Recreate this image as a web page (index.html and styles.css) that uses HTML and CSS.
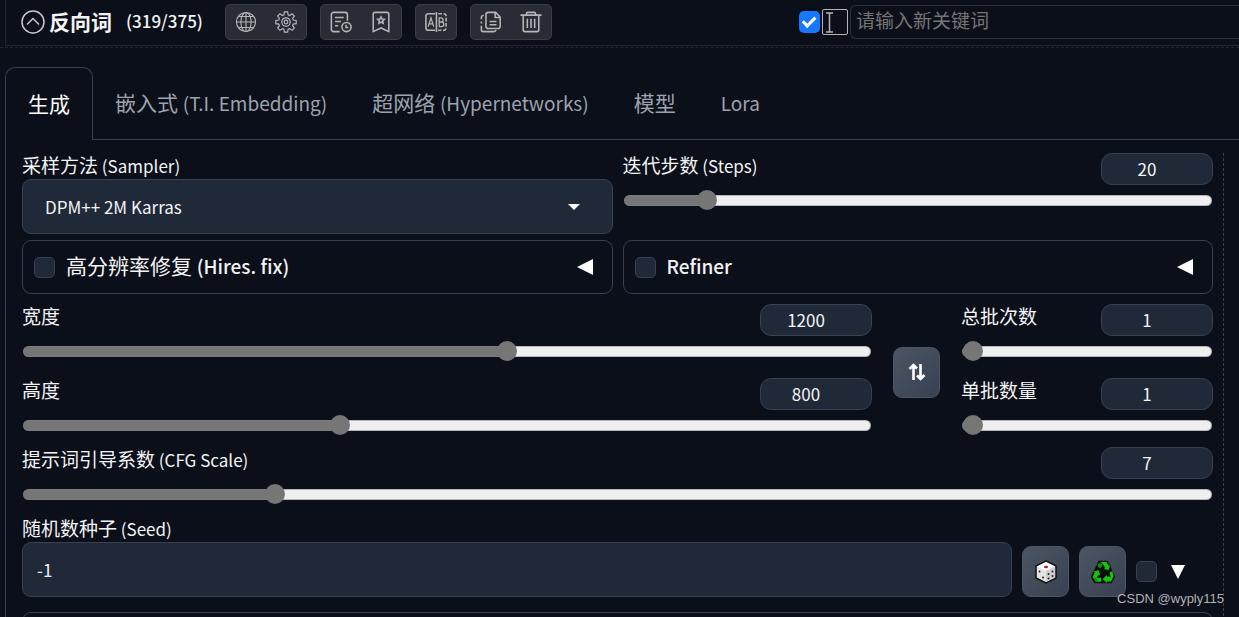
FILE: index.html
```html
<!DOCTYPE html>
<html lang="zh-CN">
<head>
<meta charset="utf-8">
<meta name="viewport" content="width=device-width, initial-scale=1">
<title>Stable Diffusion</title>
<link rel="stylesheet" href="styles.css">
</head>
<body>
<header class="prompt-bar">
  <button class="fold" type="button" aria-label="折叠">
    <svg width="24" height="24" viewBox="0 0 24 24"><circle cx="12" cy="12" r="11"/><path d="M6 14.5l6-6 6 6"/></svg>
  </button>
  <h1 class="prompt-title">反向词</h1>
  <span class="counter">(319/375)</span>
  <div class="tools">
    <div class="tool-group">
      <button type="button" aria-label="语言"><svg viewBox="0 0 24 24"><g stroke-width="1.2"><circle cx="12" cy="12" r="10.4"/><ellipse cx="12" cy="12" rx="5.6" ry="10.4"/><path d="M12 1.6v20.8M1.6 12h20.8M3.6 6h16.8M3.6 18h16.8"/></g></svg></button>
      <button type="button" aria-label="设置"><svg viewBox="0 0 24 24"><g stroke-width="1.3"><path d="M10.200 1h3.600l.5 3.200 1.700.7 2.600-1.900 2.500 2.500-1.900 2.600.7 1.700 3.200.5v3.500l-3.200.5-.7 1.700 1.900 2.600-2.500 2.500-2.600-1.900-1.700.7-.5 3.200h-3.600l-.5-3.200-1.700-.7-2.600 1.900-2.500-2.500 1.900-2.600-.7-1.700-3.200-.5v-3.500l3.200-.5.7-1.700-1.900-2.600 2.500-2.500 2.600 1.900 1.700-.7z"/><circle cx="12" cy="12" r="4.600"/><circle cx="12" cy="12" r="2"/></g></svg></button>
    </div>
    <div class="tool-group">
      <button type="button" aria-label="历史"><svg viewBox="0 0 24 24"><path d="M10.500 22.500H4a2.500 2.500 0 0 1-2.500-2.500V4A2.500 2.500 0 0 1 4 1.500h12.500A2.500 2.500 0 0 1 19 4v6.500M5.500 7H15M5.500 11.500h6.500M5.500 16h3.500"/><circle cx="18" cy="17.500" r="5"/><path d="M17.500 15v3h2.500"/></svg></button>
      <button type="button" aria-label="收藏"><svg viewBox="0 0 24 24"><path d="M3.500 22.500V3.500a2 2 0 0 1 2-2h13a2 2 0 0 1 2 2v19L12 18.500z"/><path d="M12 6.500l1.100 2.300 2.500.3-1.800 1.700.5 2.500-2.300-1.200-2.300 1.200.5-2.500-1.800-1.700 2.500-.3z"/></svg></button>
    </div>
    <div class="tool-group">
      <button type="button" aria-label="翻译"><svg viewBox="0 0 24 24"><path d="M11 3H3.500A2.500 2.500 0 0 0 1 5.500v13A2.500 2.500 0 0 0 3.500 21H11M12.500 1v22"/><path d="M14.500 3h5A2.800 2.800 0 0 1 23 6v12a2.800 2.800 0 0 1-3.500 3h-5" stroke-dasharray="4 1.800"/><path d="M3.500 17L6.500 7.500 9.500 17M4.500 14h4M15.500 7.500V17h2.500a2.500 2.500 0 0 0 0-5h-2.500 2a2.200 2.200 0 0 0 0-4.500z" stroke-width="1.400"/></svg></button>
    </div>
    <div class="tool-group">
      <button type="button" aria-label="复制"><svg viewBox="0 0 24 24"><path d="M17 1.500H9A2.500 2.500 0 0 0 6.500 4v12.500A2.500 2.500 0 0 0 9 19h10.500a2.500 2.500 0 0 0 2.500-2.500V6.500zM16.500 1.500V7H22M10.500 11.500H18M10.500 15H18"/><path d="M4 5H3.500A2 2 0 0 0 1.500 7v2M1.500 11.500v2M1.500 16v4.500a2 2 0 0 0 2 2h11.500a2.500 2.500 0 0 0 2.500-2"/></svg></button>
      <button type="button" aria-label="删除"><svg viewBox="0 0 24 24"><path d="M.5 4.500h23M7 4V3a1.500 1.500 0 0 1 1.500-1.500h7A1.500 1.500 0 0 1 17 3v1M3.500 5v15.500a2 2 0 0 0 2 2h13a2 2 0 0 0 2-2V5M8 8.500v10M12 8.500v10M16 8.500v10"/></svg></button>
    </div>
  </div>
  <div class="keyword">
    <input class="keyword-check" type="checkbox" checked aria-label="启用">
    <button class="cursor-button" type="button" aria-label="光标"><svg width="24" height="24" viewBox="0 0 24 24"><path d="M3 3h7M6.500 3v19M3 22h7"/></svg></button>
    <input class="keyword-input" type="text" placeholder="请输入新关键词" aria-label="新关键词">
  </div>
</header>

<main class="workspace">
  <nav class="tabs" role="tablist">
    <button class="tab tab-active" type="button" role="tab" aria-selected="true">生成</button>
    <button class="tab" type="button" role="tab">嵌入式 <span class="latin">(T.I. Embedding)</span></button>
    <button class="tab" type="button" role="tab">超网络 <span class="latin">(Hypernetworks)</span></button>
    <button class="tab" type="button" role="tab">模型</button>
    <button class="tab" type="button" role="tab"><span class="latin">Lora</span></button>
    <span class="tab-rest"></span>
  </nav>

  <div class="panel">
    <form class="settings">
      <div class="halves">
        <div class="field">
          <label class="label" for="sampler">采样方法<span class="latin"> (Sampler)</span></label>
          <div class="select-wrap">
            <select class="box" id="sampler"><option>DPM++ 2M Karras</option></select>
            <svg class="caret" width="12" height="6" viewBox="0 0 12 6"><path d="M0 0h12L6 6z"/></svg>
          </div>
        </div>
        <div class="slider">
          <label class="label" for="steps">迭代步数<span class="latin"> (Steps)</span></label>
          <input class="number" type="number" value="20" aria-label="迭代步数">
          <input class="range" id="steps" type="range" min="1" max="150" value="20" style="--fill:0.128">
        </div>
      </div>

      <div class="halves">
        <div class="accordion">
          <input class="check" id="hires" type="checkbox">
          <label for="hires">高分辨率修复 <span class="latin">(Hires. fix)</span></label>
          <svg width="16" height="16" viewBox="0 0 16 16"><path d="M0 8L16 0v16z"/></svg>
        </div>
        <div class="accordion">
          <input class="check" id="refiner" type="checkbox">
          <label for="refiner"><span class="latin">Refiner</span></label>
          <svg width="16" height="16" viewBox="0 0 16 16"><path d="M0 8L16 0v16z"/></svg>
        </div>
      </div>

      <div class="dimensions">
        <div class="stack">
          <div class="slider">
            <label class="label" for="width">宽度</label>
            <input class="number" type="number" value="1200" aria-label="宽度">
            <input class="range" id="width" type="range" min="64" max="2048" value="1200" style="--fill:0.573">
          </div>
          <div class="slider">
            <label class="label" for="height">高度</label>
            <input class="number" type="number" value="800" aria-label="高度">
            <input class="range" id="height" type="range" min="64" max="2048" value="800" style="--fill:0.371">
          </div>
        </div>
        <button class="square" type="button" aria-label="交换宽高"><svg width="18" height="18" viewBox="0 0 18 18"><path d="M5.500 17V3M1.500 6L5.500 2 9 5.500M12.500 1v14M9 12.500l3.500 3.500 4-4" fill="none" stroke="#fff" stroke-width="2.600"/></svg></button>
        <div class="stack">
          <div class="slider">
            <label class="label" for="count">总批次数</label>
            <input class="number" type="number" value="1" aria-label="总批次数">
            <input class="range" id="count" type="range" min="1" max="100" value="1" style="--fill:0">
          </div>
          <div class="slider">
            <label class="label" for="size">单批数量</label>
            <input class="number" type="number" value="1" aria-label="单批数量">
            <input class="range" id="size" type="range" min="1" max="8" value="1" style="--fill:0">
          </div>
        </div>
      </div>

      <div class="slider cfg">
        <label class="label" for="cfg">提示词引导系数<span class="latin"> (CFG Scale)</span></label>
        <input class="number" type="number" value="7" aria-label="提示词引导系数">
        <input class="range" id="cfg" type="range" min="1" max="30" value="7" style="--fill:0.207">
      </div>

      <div class="seed">
        <div class="field seed-field">
          <label class="label" for="seed">随机数种子<span class="latin"> (Seed)</span></label>
          <input class="box seed-input" id="seed" type="text" value="-1">
        </div>
        <button class="square" type="button" aria-label="随机种子">
          <svg width="22" height="24" viewBox="0 0 22 24"><path d="M11 1l10 5v12l-10 5L1 18V6z" fill="#e4e4e4" stroke="#111" stroke-width="1.500"/><path d="M11 2l9 4.500-9 4.500-9-4.500z" fill="#fff"/><path d="M11 11l9-4.500v11L11 22z" fill="#cfcfcf"/><ellipse cx="11" cy="7" rx="2" ry="1.200" fill="#c4122d"/><g fill="#222"><circle cx="4.500" cy="11.500" r="1"/><circle cx="8" cy="17.500" r="1"/><circle cx="13.500" cy="14" r="1"/><circle cx="17.500" cy="11.500" r="1"/><circle cx="13.500" cy="18.500" r="1"/><circle cx="17.500" cy="16" r="1"/></g></svg>
        </button>
        <button class="square" type="button" aria-label="重用种子">
          <svg width="24" height="24" viewBox="0 0 24 24"><path d="M8 1.500h8l3 5 1.500 5 3 5-3.500 6H4L.5 17l4-8z" fill="#071007" stroke="#071007" stroke-width="1.500" stroke-linejoin="round"/><g fill="#16c60c"><path d="M9.500 2h6l2.200 3.800 1.500-.7-1.600 5-4.800-1.200 1.500-1-2.500-4z"/><path d="M18.500 12.500l2.700-1.200 1.500 4.700-2.700 5.500H16v1.500l-4.500-4 4.500-4v1.800h3.800z"/><path d="M2.500 11.500l5-1.300 1.800 5.300-1.700-.8-1.900 3H10v4H4.500L1.500 17l2.300-4.500z"/></g><path d="M8.500 2.500l3 2.200-1.800 3.800-3.500-2zM2 17.200l3.500.8L7 21.500H4.700z" fill="#0b8f08"/></svg>
        </button>
        <div class="extra">
          <input class="check" type="checkbox" aria-label="更多">
          <svg width="14" height="14" viewBox="0 0 14 14"><path d="M0 0h14L7 14z"/></svg>
        </div>
      </div>

      <section class="next-group"></section>
    </form>
  </div>
</main>
<div class="watermark">CSDN @wyply115</div>
</body>
</html>
```
FILE: styles.css
```css
* { box-sizing: border-box; }

body {
  margin: 0;
  height: 100vh;
  overflow: hidden;
  background: #0b0f19;
  color: #f3f4f6;
  font-family: "Noto Sans CJK SC", sans-serif;
  font-size: 19px;
  line-height: 24px;
}

button, input, select { font: inherit; color: inherit; margin: 0; }
button { padding: 0; border: 0; background: none; }
svg { display: block; fill: #fff; flex: none; }
.latin { line-height: 16px; }

/* Prompt toolbar */
.prompt-bar {
  display: flex;
  align-items: center;
  height: 46px;
  margin-left: 5px;
  padding: 0 0 2px 15px;
  border-left: 1px solid #1f2430;
  border-bottom: 1px solid #1f2430;
}
.fold svg { fill: none; stroke: #c9c9c9; stroke-width: 1.5; }
.prompt-title { margin: 0 0 0 4px; padding-bottom: 2px; font-size: 21px; font-weight: 700; }
.counter { margin-left: 14px; padding-bottom: 2px; font-size: 17px; font-weight: 500; }
.tools { display: flex; gap: 13px; margin-left: 22px; }
.tool-group {
  display: flex;
  gap: 18px;
  height: 36px;
  padding: 0 9px;
  align-items: center;
  border: 1px solid #3b3d47;
  border-radius: 5px;
  background: #292b35;
}
.tool-group svg { width: 22px; height: 22px; fill: none; stroke: #b5b5b8; stroke-width: 1.7; }
.keyword { display: flex; align-items: center; flex: 1; margin-left: 247px; }
.keyword-check {
  appearance: none;
  width: 21px;
  height: 22px;
  border-radius: 5px;
  background: #1677ff;
  display: grid;
  place-items: center;
}
.keyword-check::after {
  content: "";
  width: 5px;
  height: 10px;
  margin-bottom: 2px;
  border: solid #fff;
  border-width: 0 3px 3px 0;
  transform: rotate(45deg);
}
.cursor-button { margin: 0 2px; border: 1px solid #b5b5b5; border-radius: 2px; }
.cursor-button svg { fill: none; stroke: #b5b5b5; stroke-width: 1.5; }
.keyword-input {
  flex: 1;
  min-width: 0;
  height: 34px;
  padding: 0 5px 4px;
  border: 1px solid #2b2f38;
  border-right: 0;
  border-radius: 6px 0 0 6px;
  background: transparent;
}
.keyword-input::placeholder { color: #757575; opacity: 1; }

/* Tabs */
.workspace { margin-top: 1px; border-top: 1px dashed #1f2430; padding: 19px 0 0 5px; }
.tabs { display: flex; height: 73px; font-size: 21px; }
.tab {
  padding: 0 23px 2px 22px;
  color: #9ca3af;
  border-bottom: 1px solid #374151;
  white-space: nowrap;
}
.tab-active {
  padding: 0 22px 2px;
  color: #fff;
  border: 1px solid #374151;
  border-bottom: 0;
  border-radius: 10px 10px 0 0;
}
.tab-rest { flex: 1; border-bottom: 1px solid #374151; }
.tabs .latin, .accordion .latin { font-size: 19px; }

/* Settings */
.panel { border-left: 1px solid #374151; padding: 13px 15px 0 0; }
.settings {
  display: flex;
  flex-direction: column;
  gap: 6px;
  padding: 0 10px 0 16px;
  border-right: 1px dashed #374151;
}
.halves { display: grid; grid-template-columns: 1fr 1fr; gap: 10px; }
.label { display: block; height: 26px; white-space: nowrap; }
.label .latin { font-size: 17px; }
.box {
  display: block;
  width: 100%;
  height: 55px;
  border: 1px solid #374151;
  border-radius: 9px;
  background: #1f2937;
  font-size: 17px;
}
.select-wrap { display: grid; align-items: center; }
.select-wrap > * { grid-area: 1 / 1; }
select.box { appearance: none; padding: 0 22px; }
.caret { justify-self: end; margin-right: 33px; pointer-events: none; }

.slider {
  display: grid;
  grid-template-columns: 1fr 112px;
  grid-template-rows: 32px 30px;
}
.number {
  appearance: textfield;
  width: 100%;
  height: 32px;
  padding: 0 20px 1px 0;
  border: 1px solid #374151;
  border-radius: 11px;
  background: #1f2937;
  font-size: 17px;
  text-align: center;
}
.number::-webkit-inner-spin-button { appearance: none; margin: 0; }
.range {
  appearance: none;
  grid-column: 1 / -1;
  width: 100%;
  height: 30px;
  margin: 0;
  background: transparent;
}
.range::-webkit-slider-runnable-track {
  height: 11px;
  margin: 0 1px;
  border: 1px solid rgba(128, 128, 128, 0.5);
  border-radius: 6px;
  background: linear-gradient(#767676, #767676) 0 0 / calc(10px + (100% - 20px) * var(--fill)) 100% no-repeat border-box, #efefef;
}
.range::-webkit-slider-thumb {
  appearance: none;
  width: 20px;
  height: 20px;
  margin-top: -6px;
  border-radius: 50%;
  background: #767676;
}

.accordion {
  display: flex;
  align-items: center;
  height: 54px;
  padding: 0 19px 0 11px;
  border: 1px solid #374151;
  border-radius: 9px;
  font-size: 21px;
}
.accordion label { flex: 1; margin-left: 11px; padding-bottom: 4px; }
.accordion .latin { font-weight: 500; }
.check {
  appearance: none;
  width: 21px;
  height: 21px;
  border: 1px solid #374151;
  border-radius: 5px;
  background: #1f2937;
}

.dimensions {
  display: grid;
  grid-template-columns: minmax(0, 1fr) 47px 252px;
  column-gap: 21px;
  align-items: center;
  padding-top: 4px;
}
.stack { display: grid; gap: 12px; }
.square {
  display: grid;
  place-items: center;
  width: 47px;
  height: 51px;
  border: 1px solid #4b5563;
  border-radius: 9px;
  background: linear-gradient(to bottom right, #4b5563, #374151);
}
.cfg { padding-top: 1px; }

.seed { display: flex; align-items: flex-end; gap: 10px; padding-top: 1px; }
.seed-field { flex: 1; }
.seed-input { padding: 0 14px; }
.extra { display: flex; align-items: center; gap: 14px; width: 77px; height: 51px; }
.next-group { height: 54px; margin-top: 9px; border: 1px solid #374151; border-radius: 9px; }

.watermark {
  position: absolute;
  right: 15px;
  bottom: 8px;
  color: #b0b2b5;
  font: 13px/20px "Liberation Sans", sans-serif;
}
```
